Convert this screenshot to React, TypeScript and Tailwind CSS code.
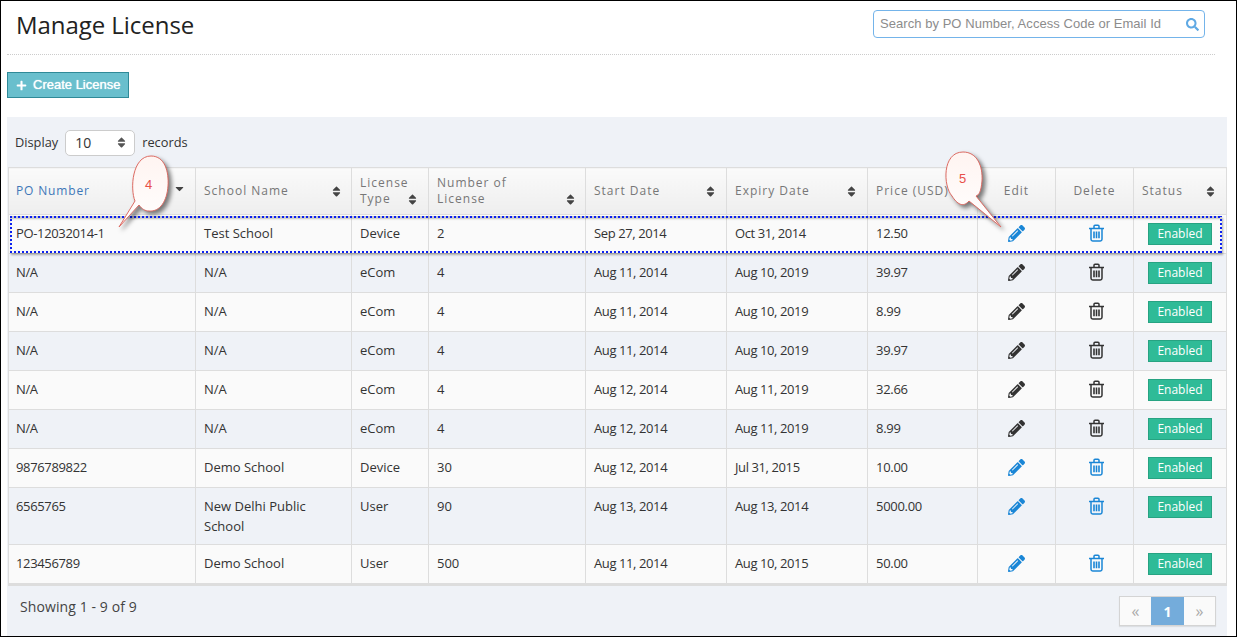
import { FaCaretDown, FaPencilAlt, FaPlus, FaSearch, FaSort } from "react-icons/fa";

const rows = [
  { po: "PO-12032014-1", school: "Test School", type: "Device", count: "2", start: "Sep 27, 2014", end: "Oct 31, 2014", price: "12.50", blue: true },
  { po: "N/A", school: "N/A", type: "eCom", count: "4", start: "Aug 11, 2014", end: "Aug 10, 2019", price: "39.97", blue: false },
  { po: "N/A", school: "N/A", type: "eCom", count: "4", start: "Aug 11, 2014", end: "Aug 10, 2019", price: "8.99", blue: false },
  { po: "N/A", school: "N/A", type: "eCom", count: "4", start: "Aug 11, 2014", end: "Aug 10, 2019", price: "39.97", blue: false },
  { po: "N/A", school: "N/A", type: "eCom", count: "4", start: "Aug 12, 2014", end: "Aug 11, 2019", price: "32.66", blue: false },
  { po: "N/A", school: "N/A", type: "eCom", count: "4", start: "Aug 12, 2014", end: "Aug 11, 2019", price: "8.99", blue: false },
  { po: "9876789822", school: "Demo School", type: "Device", count: "30", start: "Aug 12, 2014", end: "Jul 31, 2015", price: "10.00", blue: true },
  { po: "6565765", school: "New Delhi Public School", type: "User", count: "90", start: "Aug 13, 2014", end: "Aug 13, 2014", price: "5000.00", blue: true },
  { po: "123456789", school: "Demo School", type: "User", count: "500", start: "Aug 11, 2014", end: "Aug 10, 2015", price: "50.00", blue: true },
];

const thClass = "border border-[#dddddd] bg-gradient-to-b from-[#fafafa] to-[#eeeeee] px-2 align-middle text-[12px] leading-[16px] font-normal tracking-[1px] text-[#777777]";
const tdClass = "border border-[#dddddd] px-2 pt-[8px] pb-[8px] align-top leading-[20px]";
const sortClass = "text-[13px] text-[#444444]";
const dotsX = "absolute left-0 h-[2px] w-full bg-[repeating-linear-gradient(90deg,#0a20f0_0_2px,transparent_2px_4px)]";
const dotsY = "absolute top-0 h-full w-[2px] bg-[repeating-linear-gradient(0deg,#0a20f0_0_2px,transparent_2px_4px)]";

function TrashIcon({ className }: { className: string }) {
  return (
    <svg className={className} width="17" height="18" viewBox="0 0 17 18" fill="none" stroke="currentColor">
      <path d="M1 4.5h15M6 4V2.2q0-1 1-1h3q1 0 1 1V4" strokeWidth="1.5" />
      <path d="M3 4.5v10.8q0 1.7 1.7 1.7h7.6q1.7 0 1.7-1.7V4.5" strokeWidth="1.5" />
      <path d="M6 7.5v6.8M8.5 7.5v6.8M11 7.5v6.8" strokeWidth="1.6" />
    </svg>
  );
}

function Callout({ className, label, labelClass, tail }: { className: string; label: string; labelClass: string; tail: string }) {
  return (
    <div className={className}>
      <svg width="100%" height="100%" className="overflow-visible drop-shadow-[3px_3px_2px_rgba(0,0,0,0.5)]">
        <defs>
          <linearGradient id={`callout-${label}`} x1="0" y1="0" x2="0" y2="1">
            <stop offset="0" stopColor="#fff4f1" />
            <stop offset="1" stopColor="#ffffff" />
          </linearGradient>
        </defs>
        <path d={tail} fill={`url(#callout-${label})`} stroke="#dc6a62" strokeWidth="1" />
      </svg>
      <span className={labelClass}>{label}</span>
    </div>
  );
}

export default function App() {
  return (
    <div className="relative h-[637px] w-[1237px] overflow-hidden border border-black bg-white font-['Open_Sans',sans-serif] text-[13px] text-[#333333]">
      <div className="mx-[6px] flex h-[54px] w-[1208px] items-start justify-between border-b border-dotted border-[#cccccc]">
        <h1 className="mt-[5px] ml-[9px] text-[24px] leading-[38px] font-normal tracking-[-0.05px] text-[#222222]">Manage License</h1>
        <div className="mt-[9px] mr-[10px] flex h-[28px] w-[332px] items-center justify-between rounded-[4px] border border-[#74b4ea] pr-[5px] pl-[6px] font-['Liberation_Sans',sans-serif] text-[13px] tracking-[0.05px] text-[#8c8c8c]">
          <span>Search by PO Number, Access Code or Email Id</span>
          <FaSearch className="text-[13px] text-[#5fa9e4]" />
        </div>
      </div>

      <button className="mt-[17px] ml-[6px] flex h-[26px] w-[122px] items-center gap-[6px] border border-[#2f8a98] bg-[#69bfcd] pl-[8px] font-['Liberation_Sans',sans-serif] text-[13px] text-white [text-shadow:0_0_1px_#ffffff]">
        <FaPlus className="text-[11px]" />
        Create License
      </button>

      <div className="mt-[19px] ml-[6px] h-[520px] w-[1220px] bg-[#eff2f7] pl-px">
        <div className="flex h-[50px] items-center gap-[7px] pt-[1px] pl-[7px] text-[12.8px]">
          <span>Display</span>
          <div className="flex h-[26px] w-[70px] items-center justify-between rounded-[5px] border border-[#cccccc] bg-white pr-[6px] pl-[9px] text-[14px]">
            10
            <FaSort className="text-[13px] text-[#555555]" />
          </div>
          <span>records</span>
        </div>

        <table className="w-[1218px] table-fixed border-collapse">
          <colgroup>
            <col className="w-[187px]" />
            <col className="w-[156px]" />
            <col className="w-[77px]" />
            <col className="w-[157px]" />
            <col className="w-[141px]" />
            <col className="w-[141px]" />
            <col className="w-[110px]" />
            <col className="w-[78px]" />
            <col className="w-[78px]" />
            <col className="w-[93px]" />
          </colgroup>
          <thead>
            <tr className="h-[47px] text-left">
              <th className={`${thClass} !pl-[7px]`}>
                <div className="flex items-center justify-between pr-[1px] tracking-[0.85px] text-[#3d77b8]">
                  PO Number
                  <FaCaretDown className="mb-[6px] text-[13px] text-[#444444]" />
                </div>
              </th>
              <th className={thClass}>
                <div className="flex items-center justify-between">
                  School Name
                  <FaSort className={sortClass} />
                </div>
              </th>
              <th className={thClass}>
                License
                <div className="flex items-center justify-between pr-[1px]">
                  Type
                  <FaSort className={sortClass} />
                </div>
              </th>
              <th className={thClass}>
                Number of
                <div className="flex items-center justify-between">
                  License
                  <FaSort className={sortClass} />
                </div>
              </th>
              {["Start Date", "Expiry Date", "Price (USD)"].map((label) => (
                <th key={label} className={thClass}>
                  <div className="flex items-center justify-between pr-[1px]">
                    {label}
                    <FaSort className={sortClass} />
                  </div>
                </th>
              ))}
              <th className={`${thClass} !text-center`}>Edit</th>
              <th className={`${thClass} !text-center`}>Delete</th>
              <th className={thClass}>
                <div className="flex items-center justify-between pr-[1px]">
                  Status
                  <FaSort className={sortClass} />
                </div>
              </th>
            </tr>
          </thead>
          <tbody>
            {rows.map((row, index) => (
              <tr key={index} className={index % 2 === 0 ? "bg-[#fafafa]" : "bg-[#eff2f7]"}>
                <td className={`${tdClass} !pl-[7px] tracking-[-0.35px]`}>{row.po}</td>
                <td className={tdClass}>{row.school}</td>
                <td className={tdClass}>{row.type}</td>
                <td className={tdClass}>{row.count}</td>
                <td className={`${tdClass} tracking-[-0.4px]`}>{row.start}</td>
                <td className={`${tdClass} tracking-[-0.4px]`}>{row.end}</td>
                <td className={`${tdClass} tracking-[-0.3px]`}>{row.price}</td>
                <td className={`${tdClass} text-center`}>
                  <FaPencilAlt className={`mx-auto mt-[2px] text-[17px] ${row.blue ? "text-[#1a86d6]" : "text-[#333333]"}`} />
                </td>
                <td className={`${tdClass} text-center`}>
                  <TrashIcon className={`mt-[1px] ml-[24px] ${row.blue ? "text-[#1a86d6]" : "text-[#333333]"}`} />
                </td>
                <td className={`${tdClass} pt-[7px]`}>
                  <span className="mx-auto block h-[22px] w-[64px] border border-[#27a382] bg-[#2fbb97] text-center text-[12px] leading-[20px] font-medium text-white">Enabled</span>
                </td>
              </tr>
            ))}
          </tbody>
        </table>

        <div className="flex items-start justify-between border-t-2 border-[#dddddd] pt-[10px] pr-[11px] pl-[12px]">
          <span className="mt-[1px] text-[14px] leading-[20px] tracking-[0.1px] text-[#444444]">Showing 1 - 9 of 9</span>
          <div className="flex h-[30px] w-[97px] border border-[#d4d4d4] bg-[#fafafa] text-[#aaaaaa] shadow-[0_1px_1px_rgba(0,0,0,0.08)]">
            <span className="flex w-[31px] items-center justify-center text-[16px]">«</span>
            <span className="flex w-[33px] items-center justify-center bg-[#74acdb] text-[14px] font-bold text-white">1</span>
            <span className="flex w-[31px] items-center justify-center text-[16px]">»</span>
          </div>
        </div>
      </div>

      {/* screenshot annotations drawn on top of the table */}
      <div className="absolute top-[215px] left-[9px] h-[37px] w-[1212px] shadow-[1px_2px_2px_rgba(0,0,0,0.3),inset_0_3px_2px_rgba(0,0,0,0.22)]">
        <span className={`${dotsX} top-0`} />
        <span className={`${dotsX} bottom-0`} />
        <span className={`${dotsY} left-0`} />
        <span className={`${dotsY} right-0`} />
      </div>
      <Callout
        className="absolute top-[154px] left-[117px] h-[73px] w-[52px]"
        label="4"
        labelClass="absolute top-[20px] left-[27px] font-['Liberation_Sans',sans-serif] text-[13px] text-[#e8504a]"
        tail="M17 46 C12 34 14 1 33 1 C47 1 51 17 50 31 C49 46 42 57 31 56 C27 56 24 54 21 50 L1 72 Z"
      />
      <Callout
        className="absolute top-[150px] left-[942px] h-[77px] w-[60px]"
        label="5"
        labelClass="absolute top-[18px] left-[16px] font-['Liberation_Sans',sans-serif] text-[13px] text-[#e8504a]"
        tail="M9 45 C0 35 -1 1 20 1 C34 1 40 15 39 30 C38 41 36 44 33 45 L58 76 L26 50 C20 57 14 53 9 45 Z"
      />
    </div>
  );
}
